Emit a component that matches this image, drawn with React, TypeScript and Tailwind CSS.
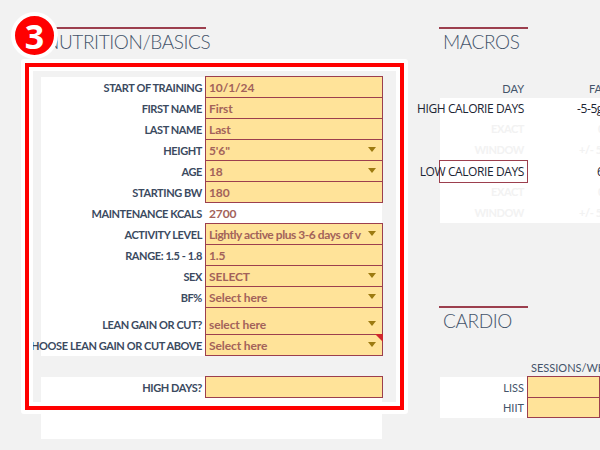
type Row = {
  label: string;
  value?: string;
  select?: boolean;
  plain?: boolean;
  tight?: boolean;
  height?: string;
  note?: boolean;
};

const rows: Row[] = [
  { label: 'START OF TRAINING', value: '10/1/24' },
  { label: 'FIRST NAME', value: 'First' },
  { label: 'LAST NAME', value: 'Last' },
  { label: 'HEIGHT', value: '5\'6"', select: true },
  { label: 'AGE', value: '18', select: true },
  { label: 'STARTING BW', value: '180' },
  { label: 'MAINTENANCE KCALS', value: '2700', plain: true },
  { label: 'ACTIVITY LEVEL', value: 'Lightly active plus 3-6 days of v', select: true, tight: true },
  { label: 'RANGE: 1.5 - 1.8', value: '1.5' },
  { label: 'SEX', value: 'SELECT', select: true },
  { label: 'BF%', value: 'Select here', select: true },
  { label: 'LEAN GAIN OR CUT?', value: 'select here', select: true, height: 'h-[27px]' },
  { label: 'CHOOSE LEAN GAIN OR CUT ABOVE', value: 'Select here', select: true, note: true },
];

const macros = [
  { label: 'HIGH CALORIE DAYS', value: '-5-5g', pad: 'pl-[50px]' },
  { label: 'EXACT', value: '0', ghost: true, pad: 'pl-[71px]' },
  { label: 'WINDOW', value: '+/- 5', ghost: true, pad: 'pl-[52px]' },
  { label: 'LOW CALORIE DAYS', value: '6', boxed: true, pad: 'pl-[70px]' },
  { label: 'EXACT', value: '0', ghost: true, pad: 'pl-[71px]' },
  { label: 'WINDOW', value: '+/- 5', ghost: true, pad: 'pl-[52px]' },
];

function Caret() {
  return <span className="w-0 h-0 border-x-[4px] border-x-transparent border-t-[5px] border-t-[#9c7a10]" />;
}

function FormRow({ row }: { row: Row }) {
  return (
    <div className={`flex w-[341px] ${row.height ?? 'h-[21px]'} bg-white`}>
      <div className="w-[164px] shrink-0 flex items-end justify-end pr-[3px] pb-[2px] text-[11px] tracking-[-0.4px] leading-[16px] font-bold text-[#3b4a5f] whitespace-nowrap">
        {row.label}
      </div>
      <div
        className={`relative -top-px h-[calc(100%+1px)] w-[178px] shrink-0 flex items-end pl-[3px] pr-[6px] pb-[1px] gap-[6px] text-[12px] leading-[16px] font-bold text-[#a3625a] ${
          row.plain ? 'border border-transparent' : 'border border-[#9c3f4e] bg-[#ffe399]'
        }`}
      >
        <span className={`flex-1 min-w-0 whitespace-nowrap ${row.tight ? 'tracking-[-0.45px]' : 'tracking-[-0.1px]'}`}>
          {row.value}
        </span>
        {row.select && (
          <span className="h-[16px] pb-[4px] flex items-center">
            <Caret />
          </span>
        )}
        {row.note && (
          <span className="absolute -top-px -right-px w-0 h-0 border-l-[8px] border-l-transparent border-t-[8px] border-t-[#d0272d]" />
        )}
      </div>
    </div>
  );
}

function SectionTitle({ title, className }: { title: string; className: string }) {
  return (
    <div className={`${className} h-[34px] border-t-2 border-[#9c3f4e] pl-1 text-[19px] font-light tracking-[-0.4px] leading-[25px] text-[#44546a] whitespace-nowrap`}>
      {title}
    </div>
  );
}

export default function App() {
  return (
    <div className="relative w-[600px] h-[450px] overflow-hidden bg-[#f2f2f2] font-['Lato',sans-serif]">
      <div className="flex pt-[27px]">
        <div className="w-[341px] ml-[41px] shrink-0">
          <SectionTitle title="NUTRITION/BASICS" className="w-[165px]" />
          <div className="h-[16px]" />
          {rows.map((row) => (
            <FormRow key={row.label} row={row} />
          ))}
          <div className="h-[21px]" />
          <div className="bg-white h-[62px]">
            <FormRow row={{ label: 'HIGH DAYS?', value: '' }} />
          </div>
        </div>

        <div className="ml-[57px] w-[161px] shrink-0">
          <SectionTitle title="MACROS" className="w-[89px]" />
          <div className="h-[19px]" />
          <div className="flex h-[18px] ml-px items-center text-[11px] text-[#44546a]">
            <div className="w-[87px] shrink-0 pr-[3px] text-right">DAY</div>
            <div className="shrink-0 pl-[62px]">FAT</div>
          </div>
          <div className="ml-px h-[125px] w-[160px] bg-white">
            {macros.map((m, i) => (
              <div
                key={i}
                className={`flex h-[21px] items-center whitespace-nowrap ${
                  m.ghost
                    ? 'text-[11px] tracking-[-0.4px] font-bold text-[#f2f2f2]'
                    : "font-['Open_Sans',sans-serif] text-[12px] tracking-[-0.4px] text-[#1b2433]"
                }`}
              >
                <div
                  className={`shrink-0 flex justify-end pr-[3px] ${
                    m.boxed ? 'h-[23px] -mx-px w-[89px] items-center border border-[#9c3f4e]' : 'w-[87px]'
                  }`}
                >
                  {m.label}
                </div>
                <div className={`shrink-0 ${m.pad}`}>{m.value}</div>
              </div>
            ))}
          </div>
          <div className="h-[83px]" />
          <SectionTitle title="CARDIO" className="w-[89px]" />
          <div className="h-[19px]" />
          <div className="flex h-[18px] ml-px items-center text-[11px] text-[#44546a] whitespace-nowrap">
            <div className="w-[91px] shrink-0" />
            <div>SESSIONS/WK</div>
          </div>
          <div className="ml-px flex w-[160px] h-[41px] bg-white">
            <div className="w-[87px] shrink-0 text-[11px] text-[#44546a] text-right pr-[3px]">
              <div className="h-[21px] leading-[21px]">LISS</div>
              <div className="h-[20px] leading-[20px]">HIIT</div>
            </div>
            <div className="relative -top-px flex-1 h-[42px]">
              <div className="h-[22px] border border-[#9c3f4e] bg-[#ffe399]" />
              <div className="h-[21px] -mt-px border border-[#9c3f4e] bg-[#ffe399]" />
            </div>
          </div>
        </div>
      </div>

      {/* annotation overlay */}
      <div className="absolute left-[21px] top-[59px] w-[387px] h-[355px] rounded-[3px] border-4 border-white pointer-events-none">
        <div className="w-full h-full border-4 border-[#ff0000]">
          <div className="w-full h-full border-4 border-white" />
        </div>
      </div>
      <div className="absolute left-[11px] top-[12px] w-[47px] h-[47px] rounded-full bg-[#ff0000] border-4 border-white flex items-center justify-center text-white text-[34px] leading-none font-bold font-['Open_Sans',sans-serif]">
        3
      </div>
    </div>
  );
}
